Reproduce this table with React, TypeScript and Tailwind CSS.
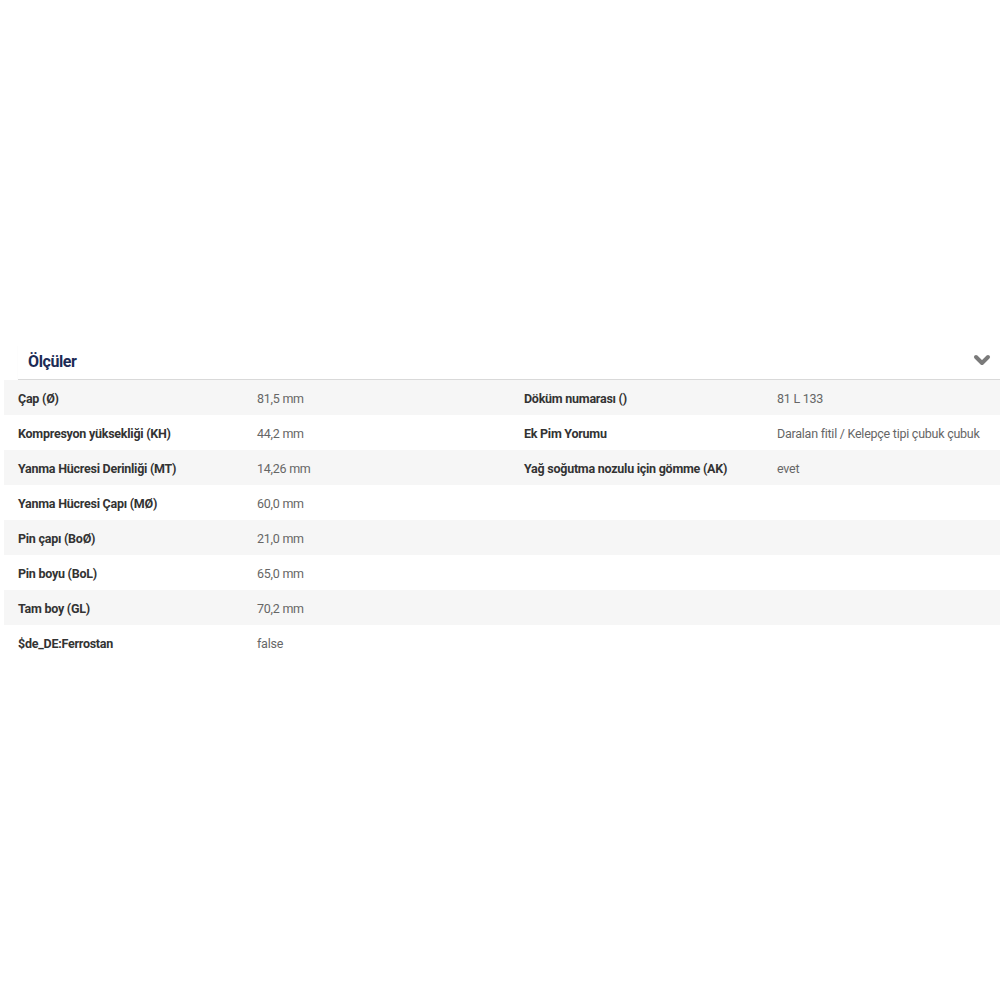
import React from "react";

const left: [string, string][] = [
  ["Çap (Ø)", "81,5 mm"],
  ["Kompresyon yüksekliği (KH)", "44,2 mm"],
  ["Yanma Hücresi Derinliği (MT)", "14,26 mm"],
  ["Yanma Hücresi Çapı (MØ)", "60,0 mm"],
  ["Pin çapı (BoØ)", "21,0 mm"],
  ["Pin boyu (BoL)", "65,0 mm"],
  ["Tam boy (GL)", "70,2 mm"],
  ["$de_DE:Ferrostan", "false"],
];
const right: [string, string][] = [
  ["Döküm numarası ()", "81 L 133"],
  ["Ek Pim Yorumu", "Daralan fitil / Kelepçe tipi çubuk çubuk"],
  ["Yağ soğutma nozulu için gömme (AK)", "evet"],
];

export default function App() {
  return (
    <div
      className="w-[1000px] h-[1000px] bg-white pt-[345px]"
      style={{ fontFamily: '"Roboto", sans-serif' }}
    >
      <div className="ml-[18px] h-[35px] flex items-center justify-between border-b border-[#d9d9d9] shadow-[0_1px_1px_rgba(0,0,0,0.06)]">
        <span className="pl-[10px] text-[16px] tracking-[-0.4px] font-bold text-[#1c2b55]">Ölçüler</span>
        <svg width="18" height="12" viewBox="0 0 18 12" className="mr-[9px] mb-[4px]">
          <polyline points="3,3 9,9 15,3" fill="none" stroke="#7a7a7a" strokeWidth="4" strokeLinecap="round" strokeLinejoin="round" />
        </svg>
      </div>
      <div className="ml-[4px]">
        {left.map((l, i) => {
          const r = right[i];
          return (
            <div
              key={i}
              className={`flex items-center h-[35px] pt-[4px] text-[12.5px] tracking-[-0.25px] ${i % 2 === 0 ? "bg-[#f6f6f6]" : "bg-white"}`}
            >
              <div className="w-[253px] pl-[14px] font-bold text-[#333]">{l[0]}</div>
              <div className="w-[267px] text-[#666]">{l[1]}</div>
              <div className="w-[253px] font-bold text-[#333]">{r ? r[0] : ""}</div>
              <div className="flex-1 text-[#666]">{r ? r[1] : ""}</div>
            </div>
          );
        })}
      </div>
    </div>
  );
}
